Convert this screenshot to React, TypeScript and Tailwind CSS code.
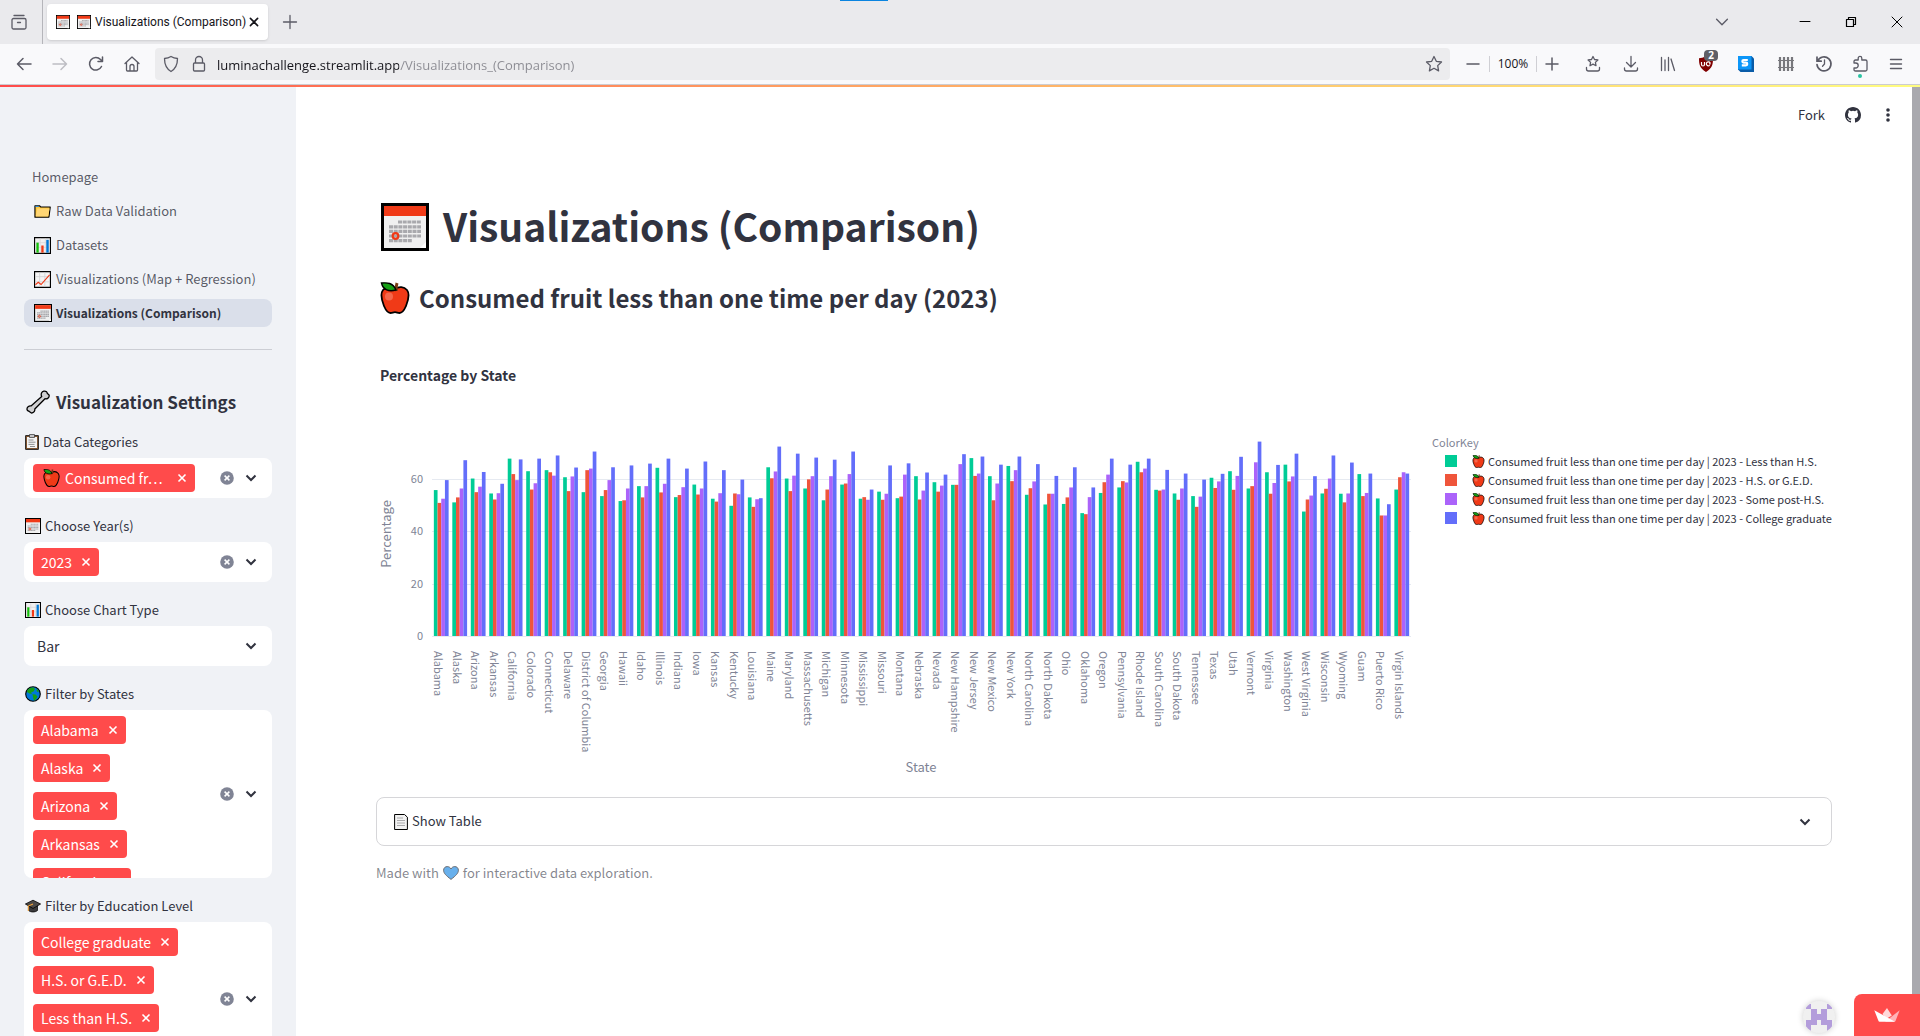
import type { ReactNode } from "react";

type IconProps = { className?: string };

/* ---------- Browser icons ---------- */

function Line({ d, className = "size-5", w = 1.3 }: { d: string; className?: string; w?: number }) {
  return (
    <svg viewBox="0 0 20 20" className={className} fill="none" stroke="currentColor" strokeWidth={w} strokeLinecap="round" strokeLinejoin="round" aria-hidden="true">
      <path d={d} />
    </svg>
  );
}

const STAR = "M10 2.5l2.3 4.8 5.2.7-3.8 3.6.9 5.3-4.6-2.6-4.6 2.6.9-5.3L2.5 8l5.2-.7z";

function UBlockIcon() {
  return (
    <span className="relative block">
      <svg viewBox="0 0 16 16" className="size-4" aria-hidden="true">
        <path d="M8 0C5.500 1.800 3 2.200 1 2.200c0 6 .6 9.800 7 13.800 6.400-4 7-7.800 7-13.800C13 2.200 10.500 1.800 8 0z" fill="#800000" />
        <path d="M3.500 6v2.500a1.500 1.500 0 003 0V6M11.800 9.300a2 2 0 11.200-2.600v1.300h-1" stroke="#fff" strokeWidth="1.200" fill="none" />
      </svg>
      <span className="absolute -top-1.5 left-1.5 h-[11px] w-3.5 rounded-sm bg-[#5f5f66] text-center text-[10px] leading-[11px] font-bold text-white">2</span>
    </span>
  );
}

function SIcon() {
  return (
    <svg viewBox="0 0 16 16" className="size-4" aria-hidden="true">
      <path d="M0 0h13.500L16 2.500V16H2.500L0 13.500z" fill="#0a5ca8" />
      <path d="M0 0h13.500v13.500H0z" fill="#0c96f8" />
      <path d="M9.800 4H5.700a1.300 1.300 0 000 2.700h2.200a1.300 1.300 0 010 2.700H3.800" fill="none" stroke="#fff" strokeWidth="2.200" />
    </svg>
  );
}

function FenceIcon() {
  return (
    <svg viewBox="0 0 16 16" className="size-4" fill="none" stroke="#77777c" aria-hidden="true">
      <path d="M2 1v14M6 1v14M10 1v14M14 1v14" strokeWidth="2.200" />
      <path d="M0 4.500h16M0 11.500h16" strokeWidth="1" />
    </svg>
  );
}

function HistoryIcon() {
  return (
    <svg viewBox="0 0 18 18" className="size-[18px]" fill="none" stroke="currentColor" strokeWidth="1.700" strokeLinecap="round" aria-hidden="true">
      <path d="M2.600 6A7 7 0 112 9.500M2 2v4.200h4.200" />
      <path d="M9.500 5v4l-2 2.200" strokeWidth="1.300" />
    </svg>
  );
}

function PuzzleIcon() {
  return (
    <span className="relative block">
      <svg viewBox="0 0 18 18" className="size-[18px]" fill="none" stroke="currentColor" strokeWidth="1.300" strokeLinejoin="round" aria-hidden="true">
        <path d="M3 8V6.500C3 5.500 3.500 5 4.500 5h2.700V3.200a1.800 1.800 0 013.600 0V5h3.700c1 0 1.500.5 1.500 1.500v8c0 1-.5 1.500-1.500 1.500h-10C3.500 16 3 15.500 3 14.500V13h1.700a2.400 2.400 0 000-5z" />
      </svg>
      <span className="absolute top-[19px] left-[7px] size-1 rounded-full bg-[#2ac3a2]" />
    </span>
  );
}

function GithubIcon() {
  return (
    <svg viewBox="0 0 16 16" className="size-4" fill="#31333f" aria-hidden="true">
      <path d="M8 0C3.580 0 0 3.580 0 8c0 3.540 2.290 6.530 5.470 7.590.4.070.55-.17.55-.38 0-.19-.01-.82-.01-1.490-2.010.37-2.530-.49-2.690-.94-.09-.23-.48-.94-.82-1.130-.28-.15-.68-.52-.01-.53.63-.01 1.080.58 1.230.82.72 1.210 1.870.87 2.330.66.07-.52.28-.87.51-1.070-1.780-.2-3.640-.89-3.640-3.950 0-.87.31-1.590.82-2.150-.08-.2-.36-1.020.08-2.120 0 0 .67-.21 2.200.82a7.500 7.500 0 014 0c1.530-1.040 2.200-.82 2.200-.82.44 1.100.16 1.920.08 2.120.51.56.82 1.270.82 2.150 0 3.070-1.870 3.750-3.650 3.950.29.25.54.73.54 1.480 0 1.070-.01 1.930-.01 2.200 0 .21.15.46.55.38A8 8 0 0016 8c0-4.420-3.580-8-8-8z" />
    </svg>
  );
}

/* ---------- Emoji drawings ---------- */

function Calendar({ className }: IconProps) {
  return (
    <svg viewBox="0 0 48 48" className={className} aria-hidden="true">
      <path d="M0 0h48v48H0z" fill="#000" />
      <path d="M3 3h42v42H3z" fill="#f0f0f0" />
      <path d="M3 3h42v10H3z" fill="#f03a17" />
      <path d="M17 19h23M8 23.800h32M8 28.400h32M8 33h32M8 37.600h23" stroke="#a9a9ad" strokeWidth="3.200" strokeDasharray="4 .7" />
      <circle cx="14.500" cy="33" r="2.800" fill="none" stroke="#f03a17" strokeWidth="2.200" />
      <path d="M39 45l6-6v6z" fill="#fff" />
    </svg>
  );
}

function Apple({ className }: IconProps) {
  return (
    <svg viewBox="0 0 30 32" className={className} aria-hidden="true">
      <path d="M15 7c4-3 9-2.500 12 1 3.500 4.500 1 11-1 16-1.700 4-3.500 7-6.500 7-2 0-2.500-.8-4.500-.8S12.500 31 10.500 31C7.500 31 5.700 28 4 24 2 19-.5 12.500 3 8c3-3.500 8-4 12-1z" fill="#f03a17" stroke="#000" strokeWidth="1.800" />
      <path d="M16.500 9c-.5-2.500-.5-5 .5-8" stroke="#7a3c14" strokeWidth="3" fill="none" />
      <path d="M1.500 1C7 .5 13 .5 16 8 9 10 3 8 1.500 1z" fill="#16a016" stroke="#000" strokeWidth="1.400" />
      <circle cx="9" cy="14.500" r="4" fill="#f4674c" />
    </svg>
  );
}

function Folder({ className }: IconProps) {
  return (
    <svg viewBox="0 0 18 18" className={className} aria-hidden="true">
      <path d="M1 3h5l1 1.200h10.200L15.800 15H1z" fill="#ffc83d" stroke="#000" strokeWidth="1.200" strokeLinejoin="round" />
      <path d="M3.500 5.800h13L15 14.300H1.800z" fill="#ffd674" />
      <path d="M1.500 3h3.500v1.200H1.500z" fill="#2f8fe0" />
    </svg>
  );
}

function BarEmoji({ className }: IconProps) {
  return (
    <svg viewBox="0 0 18 18" className={className} aria-hidden="true">
      <path d="M.6.600h16.800v16.800H.600z" fill="#f0f0f0" stroke="#000" strokeWidth="1.200" />
      <path d="M6.500 1.500v15M12 1.500v15M1.500 6h15M1.500 11h15" stroke="#d5d5d8" strokeWidth=".8" />
      <path d="M2.500 6H5v10.500H2.500z" fill="#16c00c" />
      <path d="M7.700 9h2.500v7.500H7.700z" fill="#f03a17" />
      <path d="M13 3h2.600v13.500H13z" fill="#0078d7" />
    </svg>
  );
}

function LineEmoji({ className }: IconProps) {
  return (
    <svg viewBox="0 0 18 18" className={className} aria-hidden="true">
      <path d="M.6.600h16.800v16.800H.600z" fill="#f4f4f4" stroke="#000" strokeWidth="1.200" />
      <path d="M6 1.500v15M11.500 1.500v15M1.500 6h15M1.500 11.500h15" stroke="#d0d0d3" strokeWidth=".8" />
      <path d="M1.500 14.500L4.500 12l3 2.300L16.500 4" fill="none" stroke="#f03a17" strokeWidth="1.200" />
    </svg>
  );
}

function Wrench({ className }: IconProps) {
  return (
    <svg viewBox="0 0 24 24" className={className} aria-hidden="true">
      <path d="M15.500 3c1-2 3.500-2.500 5-1.200.9.800.5 1.500 1.200 2 .9.600 1.700.700 1.500 2.200-.3 2.200-2.200 3.200-4.200 2.700L8.800 19c.3 2-1 3.800-3 4-1.300.1-1.600-1-2.300-1.400C2.700 21 1.200 21 1 19.300c-.2-2 1.800-3.700 4-3.400L15.700 6.500c-.5-1-.6-2.500-.2-3.500z" fill="#cfcfd1" stroke="#000" strokeWidth="1.300" strokeLinejoin="round" />
    </svg>
  );
}

function Clipboard({ className }: IconProps) {
  return (
    <svg viewBox="0 0 14 16" className={className} aria-hidden="true">
      <path d="M.6 1.600h12.800v13.800H.600z" fill="#8a5a32" stroke="#222" strokeWidth="1" />
      <path d="M2 3h10v11H2z" fill="#f4f4f4" />
      <path d="M4.500.500h5v3h-5z" fill="#c5c5c8" stroke="#333" strokeWidth=".7" />
      <path d="M3.500 6h5M3.500 8.200h7M3.500 10.400h6M5 12.500h5" stroke="#777" strokeWidth=".8" />
    </svg>
  );
}

function Globe({ className }: IconProps) {
  return (
    <svg viewBox="0 0 16 16" className={className} aria-hidden="true">
      <circle cx="8" cy="8" r="7.300" fill="#0078d7" stroke="#000" strokeWidth="1.100" />
      <path d="M2.500 4C4 2 6.500 1.300 8.500 1.500L10 3 8.500 5.500 6 6.500 7 8 4.500 7.500 2 6z" fill="#16a016" />
      <path d="M7.500 8.200l3 .3 2 2-1.500 2.500-2 1.800-.8-3z" fill="#16a016" />
      <path d="M12 2.800l2 2.700-1.500.5-1-1.500z" fill="#16a016" />
    </svg>
  );
}

function GradCap({ className }: IconProps) {
  return (
    <svg viewBox="0 0 16 16" className={className} aria-hidden="true">
      <path d="M3.500 7v5.500c2.500 2 6.500 2 9 0V7z" fill="#3a3a3c" stroke="#000" strokeWidth=".7" />
      <path d="M8 2.200L.4 6 8 10.500 15.600 6z" fill="#4c4a48" stroke="#000" strokeWidth=".8" strokeLinejoin="round" />
      <path d="M8 6L3.300 8v5" fill="none" stroke="#f2a33a" strokeWidth="1.100" />
    </svg>
  );
}

function PageEmoji({ className }: IconProps) {
  return (
    <svg viewBox="0 0 14 16" className={className} aria-hidden="true">
      <path d="M.6.500h9.900l2.900 2.700v12.300H.600z" fill="#f2f2f2" stroke="#000" strokeWidth="1" />
      <path d="M3 4h6M3 6.500h8M3 9h8M3 11.500h8" stroke="#a0a0a3" strokeWidth=".9" />
    </svg>
  );
}

function Heart({ className }: IconProps) {
  return (
    <svg viewBox="0 0 16 14" className={className} aria-hidden="true">
      <path d="M8 13.400C3 9.500.6 7.200.6 4.300.6 2 2.200.600 4.200.600 6 .600 7.300 1.500 8 3 8.700 1.500 10 .600 11.800.600c2 0 3.600 1.400 3.600 3.700 0 2.900-2.400 5.200-7.400 9.100z" fill="#68b0ec" stroke="#6b6b70" strokeWidth="1" />
    </svg>
  );
}

/* ---------- Shared sidebar pieces ---------- */

function Chevron({ className = "size-3" }: IconProps) {
  return (
    <svg viewBox="0 0 12 12" className={className} fill="none" stroke="#31333f" strokeWidth="2" aria-hidden="true">
      <path d="M1.500 3.500L6 8l4.500-4.500" />
    </svg>
  );
}

function Tag({ children, width = "" }: { children: ReactNode; width?: string }) {
  return (
    <span className={`flex h-7 shrink-0 items-center gap-[9px] rounded bg-[#ff4b4b] px-2 text-[14px] leading-5 text-white ${width}`}>
      <span className="flex flex-1 items-center gap-[5px] whitespace-nowrap">{children}</span>
      <button type="button" aria-label="Remove" className="flex size-[10px] items-center justify-center">
        <svg viewBox="0 0 10 10" className="size-[10px]" stroke="#fff" strokeWidth="1.600" aria-hidden="true">
          <path d="M1.500 1.500l7 7M8.500 1.500l-7 7" />
        </svg>
      </button>
    </span>
  );
}

function Field({ icon, label, children }: { icon: ReactNode; label: string; children: ReactNode }) {
  return (
    <section aria-label={label}>
      <h3 className="mb-1 flex h-6 items-center gap-1 pl-px text-[13px] leading-6">
        {icon}
        {label}
      </h3>
      {children}
    </section>
  );
}

function MultiSelect({ children, height = "" }: { children: ReactNode; height?: string }) {
  return (
    <div className={`flex items-center overflow-hidden rounded-lg bg-white pr-[15px] ${height}`}>
      <div className="flex flex-1 flex-col items-start gap-2.5 self-stretch py-1.5 pl-[9px]">{children}</div>
      <button type="button" aria-label="Clear all" className="mr-[11px]">
        <svg viewBox="0 0 14 14" className="size-3.5" aria-hidden="true">
          <circle cx="7" cy="7" r="6.800" fill="#808495" />
          <path d="M4.600 4.600l4.800 4.800M9.400 4.600L4.600 9.400" stroke="#fff" strokeWidth="1.500" />
        </svg>
      </button>
      <button type="button" aria-label="Open">
        <Chevron />
      </button>
    </div>
  );
}

/* ---------- Chart ---------- */

const COLORS = ["#00cc96", "#ef553b", "#ab63fa", "#636efa"];
const LEVELS = ["Less than H.S.", "H.S. or G.E.D.", "Some post-H.S.", "College graduate"];

const DATA: [string, number, number, number, number][] = [
  ["Alabama", 55.7, 50.8, 52.4, 59.5],
  ["Alaska", 51, 52.9, 56.3, 67.1],
  ["Arizona", 60.1, 54.9, 57, 62.6],
  ["Arkansas", 54.4, 52.1, 54.5, 58.1],
  ["California", 67.7, 61.8, 59.5, 67.4],
  ["Colorado", 62.9, 55.9, 58.3, 67.7],
  ["Connecticut", 63.3, 62.5, 61.2, 68.9],
  ["Delaware", 60.6, 55.3, 60.9, 64.3],
  ["District of Columbia", 54.9, 63.3, 63.9, 70.4],
  ["Georgia", 53.4, 55.7, 59.5, 64.4],
  ["Hawaii", 51.5, 51.8, 56.3, 65.1],
  ["Idaho", 57.2, 52.9, 57.2, 65.8],
  ["Illinois", 64.2, 54.8, 58.1, 67.7],
  ["Indiana", 53, 53.8, 56.8, 63.9],
  ["Iowa", 57.8, 54, 56.3, 66.6],
  ["Kansas", 52.4, 51.3, 54.5, 63.3],
  ["Kentucky", 49.7, 54.4, 54.1, 59.7],
  ["Louisiana", 52.9, 49.3, 52.2, 52.6],
  ["Maine", 64.4, 60.2, 62.8, 72.3],
  ["Maryland", 60.1, 55.3, 61.2, 69.6],
  ["Massachusetts", 56.3, 59.8, 61, 68.1],
  ["Michigan", 51.8, 55.9, 61, 67.3],
  ["Minnesota", 57.8, 58.2, 61.8, 70.4],
  ["Mississippi", 52.4, 53, 52, 55.9],
  ["Missouri", 55.1, 52, 54.3, 65.1],
  ["Montana", 52.6, 53.2, 61.6, 65.9],
  ["Nebraska", 61, 52.1, 55.5, 62.4],
  ["Nevada", 58.7, 55.1, 57.4, 61.6],
  ["New Hampshire", 57.7, 57.7, 65.6, 69.4],
  ["New Jersey", 67.9, 61.1, 62, 68.5],
  ["New Mexico", 61, 51.8, 58.2, 65.4],
  ["New York", 64.9, 59.1, 63.3, 68.5],
  ["North Carolina", 53.9, 56.4, 59, 65.6],
  ["North Dakota", 50.2, 54.3, 54.3, 61.1],
  ["Ohio", 50.4, 52.9, 56.7, 64.4],
  ["Oklahoma", 46.9, 46.5, 53, 56.7],
  ["Oregon", 54.6, 58.7, 61.6, 67.7],
  ["Pennsylvania", 56.7, 59.1, 58.6, 65.4],
  ["Rhode Island", 66.5, 62.5, 63.9, 67.7],
  ["South Carolina", 55.8, 55.5, 55.9, 63.4],
  ["South Dakota", 54.4, 52, 56.3, 62],
  ["Tennessee", 53.4, 49.3, 53.2, 59.7],
  ["Texas", 60.4, 56.5, 59, 61.9],
  ["Utah", 62.9, 55.8, 61.1, 68.4],
  ["Vermont", 56.3, 57.2, 66.3, 74.2],
  ["Virginia", 62.5, 54.3, 58.4, 65.3],
  ["Washington", 65.4, 59, 60.9, 69.6],
  ["West Virginia", 47.5, 52.1, 53.6, 61],
  ["Wisconsin", 54.4, 56.2, 60.1, 68.9],
  ["Wyoming", 54.3, 51, 54.4, 66.2],
  ["Guam", 61.8, 53.4, 54.6, 62],
  ["Puerto Rico", 52.5, 46, 46, 50.3],
  ["Virgin Islands", 55.9, 60.6, 62.5, 62],
];

const LEFT = 56;
const RIGHT = 1035;
const BASE = 284;
const UNIT = 2.62;

function Chart() {
  const step = (RIGHT - LEFT) / DATA.length;
  const bar = (step * 0.8) / 4;
  return (
    <svg viewBox="0 0 1456 436" className="block h-auto w-full overflow-visible" role="img" aria-label="Percentage by State">
      <text x="4" y="29" fontWeight="700" className="fill-[#31333f] text-[14px]">Percentage by State</text>
      {[0, 20, 40, 60].map((v) => (
        <g key={v}>
          <path d={`M${LEFT} ${Math.round(BASE - v * UNIT) + 0.5}H${RIGHT}`} stroke="#e6eaf1" />
          <text x="47" y={BASE - v * UNIT + 4} textAnchor="end" className="fill-[#808495] text-[11px]">{v}</text>
        </g>
      ))}
      {DATA.map(([name, ...values], i) => {
        const x = LEFT + i * step;
        return (
          <g key={name}>
            {values.map((v, k) => (
              <rect key={k} x={x + step * 0.1 + k * bar} y={BASE - v * UNIT} width={bar} height={v * UNIT} fill={COLORS[k]} />
            ))}
            <text transform={`translate(${x + step / 2 - 7} 299) rotate(90)`} className="fill-[#808495] text-[11px]">{name}</text>
          </g>
        );
      })}
      <text x="545" y="420" textAnchor="middle" className="fill-[#808495] text-[13px]">State</text>
      <text transform="translate(15 182) rotate(-90)" textAnchor="middle" className="fill-[#808495] text-[13px]">Percentage</text>
      <text x="1056" y="95" className="fill-[#808495] text-[11px]">ColorKey</text>
      {LEVELS.map((level, i) => (
        <g key={level} transform={`translate(1069 ${103 + i * 19})`}>
          <rect width="12" height="12" fill={COLORS[i]} />
          <svg x="27" y="0" width="13" height="13">
            <Apple />
          </svg>
          <text x="43" y="11" className="fill-[#31333f] text-[11px]">{`Consumed fruit less than one time per day | 2023 - ${level}`}</text>
        </g>
      ))}
    </svg>
  );
}

/* ---------- Page ---------- */

const NAV = [
  { label: "Raw Data Validation", Icon: Folder },
  { label: "Datasets", Icon: BarEmoji },
  { label: "Visualizations (Map + Regression)", Icon: LineEmoji },
];

function BrowserChrome() {
  return (
    <header className="relative shrink-0 font-['Open_Sans','Noto_Sans',sans-serif] text-[#5b5b66]">
      <div className="absolute top-0 left-[840px] h-px w-12 bg-[#0a84e0]" />
      <div className="flex h-11 items-center bg-[#eaeaed]">
        <button type="button" aria-label="Firefox View" className="flex w-[42px] justify-center pr-1">
          <Line d="M5 3.500h10M4.500 6.500h11a1.500 1.500 0 011.500 1.500v7.500a1.500 1.500 0 01-1.500 1.500h-11A1.500 1.500 0 013 15.500V8a1.500 1.500 0 011.500-1.500zM8.500 10.500h3" />
        </button>
        <div className="h-11 w-px bg-[#b5b5ba]" />
        <div className="ml-1 flex h-9 w-[221px] items-center rounded bg-white pr-2 pl-[9px] text-[#15141a] shadow">
          <Calendar className="h-4 w-[14px] shrink-0" />
          <Calendar className="ml-[7px] size-[14px] shrink-0" />
          <span className="ml-1 flex-1 font-['Roboto',sans-serif] text-[12px] leading-5 whitespace-nowrap">Visualizations (Comparison)</span>
          <button type="button" aria-label="Close tab"><Line d="M5.500 5.500l9 9M14.500 5.500l-9 9" className="size-4" w={2} /></button>
        </div>
        <button type="button" aria-label="New tab" className="ml-3"><Line d="M10 3.500v13M3.500 10h13" /></button>
        <div className="flex-1" />
        <button type="button" aria-label="List tabs"><Line d="M4 7l6 6 6-6" className="size-[18px]" w={1.5} /></button>
        <div className="ml-[51px] flex text-black">
          <button type="button" aria-label="Minimize" className="flex w-[46px] justify-center"><Line d="M5 9.500h10" w={1} /></button>
          <button type="button" aria-label="Restore" className="flex w-[46px] justify-center"><Line d="M5.500 7.500h7v7h-7zM7.500 7.500v-2h7v7h-2" w={1.2} /></button>
          <button type="button" aria-label="Close window" className="flex w-[46px] justify-center"><Line d="M5 5l10 10M15 5L5 15" w={1} /></button>
        </div>
      </div>
      <div className="flex h-10 items-center bg-[#f9f9fb] pr-[14px] pl-[14px]">
        <div className="flex gap-4">
          <button type="button" aria-label="Back"><Line d="M17 10H3.500M9 4.500L3.500 10 9 15.500" w={1.5} /></button>
          <button type="button" aria-label="Forward" className="text-[#bdbdc3]"><Line d="M3 10h13.500M11 4.500l5.500 5.500-5.500 5.500" w={1.5} /></button>
          <button type="button" aria-label="Reload"><Line d="M15.500 12.500a6.300 6.300 0 11-1-7l1.800 1.800M16.500 3v4.500H12" w={1.5} /></button>
          <button type="button" aria-label="Home"><Line d="M3 9.500L10 3l7 6.500M4.500 8.500v7.500a1 1 0 001 1h9a1 1 0 001-1V8.500M8 17v-4.500a2 2 0 014 0V17" /></button>
        </div>
        <div className="ml-[13px] flex h-8 flex-1 items-center rounded bg-[#ececee] px-[6px]">
          <Line d="M10 2.500c2 1.300 4 1.900 6.500 2 0 6-1.500 10-6.500 13-5-3-6.500-7-6.500-13 2.500-.1 4.500-.7 6.500-2z" />
          <Line d="M6.500 9V6a3.500 3.500 0 017 0v3M5.500 9h9a1 1 0 011 1v6a1 1 0 01-1 1h-9a1 1 0 01-1-1v-6a1 1 0 011-1z" className="ml-2 size-5" />
          <input
            aria-label="Address"
            readOnly
            value="luminachallenge.streamlit.app/Visualizations_(Comparison)"
            className="ml-2 h-6 flex-1 bg-[linear-gradient(to_right,#15141a_182px,#8b8b92_182px)] bg-clip-text pt-0.5 text-[13px] leading-5 text-transparent outline-none"
          />
          <button type="button" aria-label="Bookmark"><Line d={STAR} /></button>
        </div>
        <div className="ml-[13px] flex items-center">
          <button type="button" aria-label="Zoom out"><Line d="M4 10h12" w={1.5} /></button>
          <div className="ml-1.5 flex h-4 w-12 items-center justify-center border-x border-[#cfcfd4] text-[12px] text-[#15141a]">100%</div>
          <button type="button" aria-label="Zoom in" className="ml-[5px]"><Line d="M10 4v12M4 10h12" w={1.5} /></button>
        </div>
        <div className="ml-3 flex items-center">
          <button type="button" aria-label="Bookmarks menu" className="flex w-[38px] justify-center"><Line d="M10 2.500l1.500 3 3.400.5-2.500 2.400.6 3.300-3-1.600-3 1.600.6-3.300L5.100 6l3.400-.5zM3.500 13.500v1.500a2 2 0 002 2h9a2 2 0 002-2v-1.500" /></button>
          <button type="button" aria-label="Downloads" className="flex w-[38px] justify-center"><Line d="M10 2.500v10M5.500 8.500l4.500 4.500 4.500-4.500M3.500 14v1a2 2 0 002 2h9a2 2 0 002-2v-1" /></button>
          <button type="button" aria-label="Library" className="flex w-9 justify-center"><Line d="M3.500 3.500v13M7 6v10.500M10.500 3.500v13M13 5l3.500 11.500" /></button>
          <button type="button" aria-label="uBlock Origin" className="flex w-10 justify-center"><UBlockIcon /></button>
          <button type="button" aria-label="Stylus" className="flex w-10 justify-center"><SIcon /></button>
          <button type="button" aria-label="Fence" className="flex w-10 justify-center"><FenceIcon /></button>
          <button type="button" aria-label="History" className="flex w-9 justify-center"><HistoryIcon /></button>
          <button type="button" aria-label="Extensions" className="flex w-9 justify-center"><PuzzleIcon /></button>
          <button type="button" aria-label="Menu" className="ml-2 flex justify-center"><Line d="M4.500 5.500h11M4.500 10h11M4.500 14.500h11" w={1.4} /></button>
        </div>
      </div>
      <div className="h-px bg-[#ccccd1]" />
      <div className="h-0.5 bg-linear-to-r from-[#ff4b4b] to-[#fffd80]" />
    </header>
  );
}

function Sidebar() {
  return (
    <aside className="w-[296px] shrink-0 overflow-hidden bg-[#f0f2f6] px-6 pt-[76px]">
      <nav className="flex flex-col gap-1.5 text-[13px] leading-7 text-[#31333f]/80">
        <a href="#home" className="h-7 px-2">Homepage</a>
        {NAV.map(({ label, Icon }) => (
          <a key={label} href="#page" className="flex h-7 items-center gap-[5px] pl-[10px] whitespace-nowrap">
            <Icon className="size-[17px] shrink-0" />
            {label}
          </a>
        ))}
        <a href="#comparison" aria-current="page" className="flex h-7 items-center gap-1 rounded-lg bg-[#dadfea] pl-[10px] text-[12px] font-bold whitespace-nowrap text-[#31333f]">
          <Calendar className="size-[18px] shrink-0" />
          Visualizations (Comparison)
        </a>
      </nav>
      <hr className="mt-[22px] border-[#ccced4]" />
      <h2 className="mt-9 mb-3 flex h-8 items-center gap-1.5 pl-0.5 text-[17px] leading-8 font-semibold">
        <Wrench className="size-6" />
        Visualization Settings
      </h2>
      <div className="flex flex-col gap-4">
        <Field icon={<Clipboard className="h-4 w-[14px]" />} label="Data Categories">
          <MultiSelect height="h-10">
            <Tag width="w-[162px]">
              <Apple className="ml-0.5 h-[18px] w-[17px]" />
              Consumed fr…
            </Tag>
          </MultiSelect>
        </Field>
        <Field icon={<Calendar className="size-4" />} label="Choose Year(s)">
          <MultiSelect height="h-10">
            <Tag>2023</Tag>
          </MultiSelect>
        </Field>
        <Field icon={<BarEmoji className="size-4" />} label="Choose Chart Type">
          <div className="relative flex items-center">
            <select aria-label="Choose Chart Type" className="h-10 w-full appearance-none rounded-lg bg-white px-[13px] text-[14px] leading-5">
              <option>Bar</option>
            </select>
            <Chevron className="pointer-events-none absolute right-[15px] size-3" />
          </div>
        </Field>
        <Field icon={<Globe className="size-4" />} label="Filter by States">
          <MultiSelect height="h-[168px]">
            <Tag>Alabama</Tag>
            <Tag>Alaska</Tag>
            <Tag>Arizona</Tag>
            <Tag>Arkansas</Tag>
            <Tag>California</Tag>
          </MultiSelect>
        </Field>
        <Field icon={<GradCap className="size-4" />} label="Filter by Education Level">
          <MultiSelect>
            <Tag>College graduate</Tag>
            <Tag>H.S. or G.E.D.</Tag>
            <Tag>Less than H.S.</Tag>
            <Tag>Some post-H.S.</Tag>
          </MultiSelect>
        </Field>
      </div>
    </aside>
  );
}

export default function App() {
  return (
    <div className="flex h-screen flex-col overflow-hidden bg-white font-['Noto_Sans_CJK_SC',sans-serif] text-[#31333f]">
      <BrowserChrome />
      <div className="flex min-h-0 flex-1">
        <Sidebar />
        <main className="min-w-0 flex-1 overflow-hidden">
          <div className="flex h-14 items-center justify-end gap-5 pr-[17px] text-[13px]">
            <a href="#fork">Fork</a>
            <a href="#github" aria-label="GitHub"><GithubIcon /></a>
            <button type="button" aria-label="More options" className="flex w-[14px] justify-center">
              <svg viewBox="0 0 4 14" className="h-[14px] w-1" fill="#31333f" aria-hidden="true">
                <circle cx="2" cy="2" r="1.800" />
                <circle cx="2" cy="7" r="1.800" />
                <circle cx="2" cy="12" r="1.800" />
              </svg>
            </button>
          </div>
          <div className="px-20 pt-14">
            <h1 className="flex h-14 items-center gap-[14px] pl-[5px] text-[39px] leading-[52px] font-bold">
              <Calendar className="size-12" />
              <span className="h-14">Visualizations (Comparison)</span>
            </h1>
            <h2 className="mt-[25px] mb-9 flex h-9 items-center gap-[9px] pl-1 text-[24px] leading-9 font-semibold">
              <Apple className="h-8 w-[30px]" />
              Consumed fruit less than one time per day (2023)
            </h2>
            <Chart />
            <details className="mt-[9px] rounded-lg border border-[#d6d6d9]">
              <summary className="flex h-[47px] cursor-pointer list-none items-center pr-5 pl-[17px] text-[13px] leading-6">
                <PageEmoji className="mr-1 h-4 w-[14px]" />
                <span className="flex-1 pb-0.5">Show Table</span>
                <Chevron />
              </summary>
            </details>
            <p className="mt-[15px] flex h-6 items-center gap-1 text-[13px] leading-6 text-[#31333f]/60">
              Made with <Heart className="h-[14px] w-4" /> for interactive data exploration.
            </p>
          </div>
        </main>
        <div className="w-2 shrink-0 bg-[#a9a9ae]" />
      </div>
      <div className="fixed right-0 bottom-0 flex items-center">
        <a href="#profile" aria-label="Creator profile" className="mt-1 mr-[19px] size-8 overflow-hidden rounded-full bg-[#f0f0f0] shadow-[0_0_6px_rgba(0,0,0,0.2)]">
          <svg viewBox="0 0 32 32" className="size-8" fill="#b39ddb" shapeRendering="crispEdges" aria-hidden="true">
            <path d="M3 3h5v5H3zM24 3h5v5h-5zM8 8h6v5h4V8h6v11h5v11h-5v-6h-6v-5h-4v5H8v6H3V19h5z" />
          </svg>
        </a>
        <a href="#streamlit" aria-label="Hosted with Streamlit" className="flex h-[42px] w-[66px] items-center justify-center rounded-tl-lg bg-[#ff4b4b]">
          <svg viewBox="0 0 26 14" className="h-[14px] w-[26px]" aria-hidden="true">
            <path d="M13 0l4.800 7.500L12 11 8.500 6z" fill="#ffd9da" />
            <path d="M25.700 2.300L21.500 13c-.2.500-.5.700-1 .7H11z" fill="#ffb3b8" />
            <path d="M.3 2.300L21 13.700H5.500c-.5 0-.8-.2-1-.7z" fill="#fff" />
          </svg>
        </a>
      </div>
    </div>
  );
}
